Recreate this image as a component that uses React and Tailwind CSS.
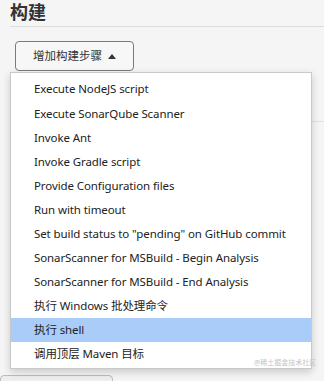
const items = [
  "Execute NodeJS script",
  "Execute SonarQube Scanner",
  "Invoke Ant",
  "Invoke Gradle script",
  "Provide Configuration files",
  "Run with timeout",
  'Set build status to "pending" on GitHub commit',
  "SonarScanner for MSBuild - Begin Analysis",
  "SonarScanner for MSBuild - End Analysis",
  "执行 Windows 批处理命令",
  "执行 shell",
  "调用顶层 Maven 目标",
];

const App = () => {
  const selected = "执行 shell";

  return (
    <div
      className="relative flex h-[381px] w-[324px] flex-col overflow-hidden bg-[#f5f5f5] text-[#333]"
      style={{ fontFamily: '"Noto Sans", "Noto Sans CJK SC", sans-serif' }}
    >
      <div className="flex flex-col pl-[10px]">
        <h2 className="h-[26px] pt-[1px] text-[18px] font-bold leading-[22px] text-[#333]">构建</h2>
        <div className="h-px bg-[#dcdcdc]" />
        <div className="flex pl-[5px] pt-[14px]">
          <button className="flex h-[30px] w-[119px] items-center justify-center gap-[6px] rounded-[4px] border border-[#7a7a7a] bg-[#f7f7f7] text-[11.5px] text-[#333]">
            增加构建步骤
            <svg width="8" height="5" viewBox="0 0 8 5">
              <path d="M0 5 L4 0 L8 5 Z" fill="#333" />
            </svg>
          </button>
        </div>
        <div className="mt-[50px] h-px bg-[#e2e2e2]" />
      </div>

      <div className="mt-auto flex">
        <div className="mb-[-20px] h-[26px] w-[113px] rounded-[4px] border border-[#bdbdbd] bg-[#eeeeee]" />
      </div>

      <div className="absolute left-[10px] top-[72px] flex w-[302px] flex-col border border-[#c9c9c9] bg-white pb-[2px] pt-[4px] shadow-[0_3px_8px_rgba(0,0,0,0.18)]">
        {items.map((item) => (
          <div
            key={item}
            className={`flex h-[24.1px] items-center whitespace-nowrap pl-[23px] text-[11.5px] tracking-[-0.1px] text-[#222] ${
              item === selected ? "bg-[#a9ccf9]" : ""
            }`}
          >
            {item}
          </div>
        ))}
      </div>

      <div className="absolute left-[254px] top-[358px] whitespace-nowrap text-[7px] text-[#c4c4c4]">@稀土掘金技术社区</div>
    </div>
  );
};

export default App;
